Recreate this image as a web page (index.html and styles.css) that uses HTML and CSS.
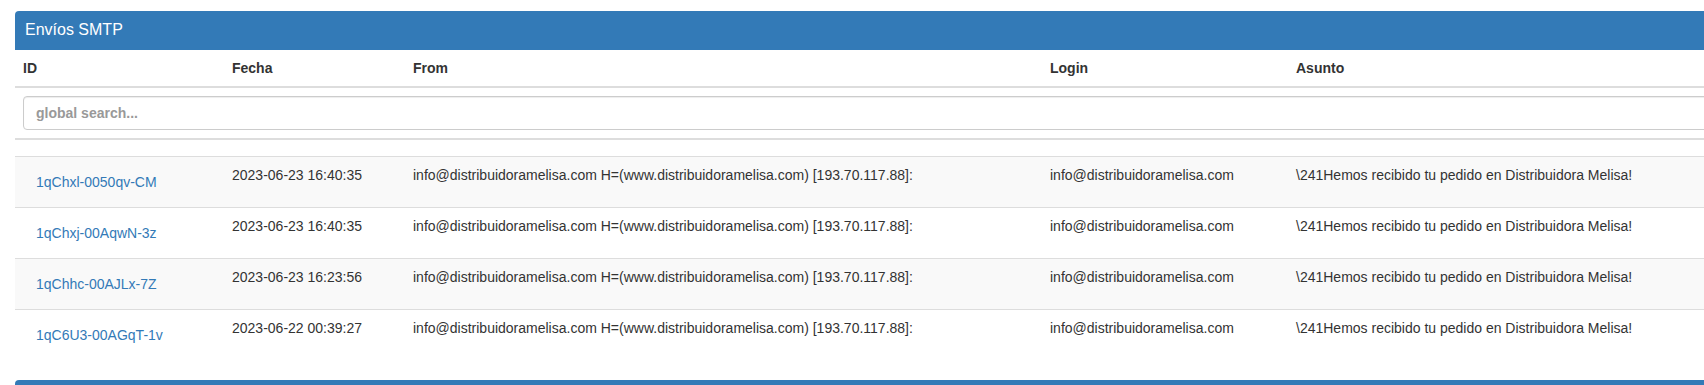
FILE: index.html
```html
<!DOCTYPE html>
<html>
<head>
  <meta charset="utf-8">
  <title>Envíos SMTP</title>
  <link rel="stylesheet" href="styles.css">
</head>
<body>
  <div class="page">
    <div class="panel">
      <div class="panel-heading">
        <h3 class="panel-title">Envíos SMTP</h3>
      </div>
      <table class="table">
        <colgroup>
          <col class="col-id">
          <col class="col-date">
          <col class="col-from">
          <col class="col-login">
          <col>
        </colgroup>
        <thead>
          <tr>
            <th>ID</th>
            <th>Fecha</th>
            <th>From</th>
            <th>Login</th>
            <th>Asunto</th>
          </tr>
          <tr>
            <th colspan="5"><input class="form-control" type="text" placeholder="global search..."></th>
          </tr>
        </thead>
        <tbody>
          <tr class="spacer"><td colspan="5"></td></tr>
          <tr class="striped">
            <td><button class="btn-link">1qChxl-0050qv-CM</button></td>
            <td>2023-06-23 16:40:35</td>
            <td>info@distribuidoramelisa.com H=(www.distribuidoramelisa.com) [193.70.117.88]:</td>
            <td>info@distribuidoramelisa.com</td>
            <td>\241Hemos recibido tu pedido en Distribuidora Melisa!</td>
          </tr>
          <tr>
            <td><button class="btn-link">1qChxj-00AqwN-3z</button></td>
            <td>2023-06-23 16:40:35</td>
            <td>info@distribuidoramelisa.com H=(www.distribuidoramelisa.com) [193.70.117.88]:</td>
            <td>info@distribuidoramelisa.com</td>
            <td>\241Hemos recibido tu pedido en Distribuidora Melisa!</td>
          </tr>
          <tr class="striped">
            <td><button class="btn-link">1qChhc-00AJLx-7Z</button></td>
            <td>2023-06-23 16:23:56</td>
            <td>info@distribuidoramelisa.com H=(www.distribuidoramelisa.com) [193.70.117.88]:</td>
            <td>info@distribuidoramelisa.com</td>
            <td>\241Hemos recibido tu pedido en Distribuidora Melisa!</td>
          </tr>
          <tr>
            <td><button class="btn-link">1qC6U3-00AGqT-1v</button></td>
            <td>2023-06-22 00:39:27</td>
            <td>info@distribuidoramelisa.com H=(www.distribuidoramelisa.com) [193.70.117.88]:</td>
            <td>info@distribuidoramelisa.com</td>
            <td>\241Hemos recibido tu pedido en Distribuidora Melisa!</td>
          </tr>
        </tbody>
      </table>
    </div>

    <div class="panel">
      <div class="panel-heading empty"></div>
    </div>
  </div>
</body>
</html>
```

FILE: styles.css
```css
body {
  font-family: "Liberation Sans", Arial, sans-serif;
  font-size: 14px;
  line-height: 20px;
  color: #333;
  background-color: #fff;
  margin: 0;
  overflow: hidden;
}

.page {
  padding: 11px 0 0 15px;
}

.panel {
  margin-right: -40px;
  margin-bottom: 20px;
  background-color: #fff;
  border-radius: 4px;
}

.panel-heading {
  background-color: #337ab7;
  color: #fff;
  padding: 10px 10px 11px;
  border-top-left-radius: 4px;
  border-top-right-radius: 4px;
}

.panel-heading.empty {
  height: 18px;
}

.panel-title {
  margin: 0;
  font-size: 16px;
  font-weight: normal;
  line-height: 18px;
}

.table {
  width: 100%;
  border-collapse: collapse;
  border-spacing: 0;
}

.col-id { width: 209px; }
.col-date { width: 181px; }
.col-from { width: 637px; }
.col-login { width: 246px; }

.table th,
.table td {
  padding: 8px;
  text-align: left;
  vertical-align: top;
}

.table th {
  font-weight: bold;
  border-bottom: 2px solid #ddd;
}

.table td {
  border-top: 1px solid #ddd;
}

.table .spacer td {
  border-top: none;
  padding: 8px;
  height: 0;
}

.table tr.striped td {
  background-color: #f9f9f9;
}

.form-control {
  display: block;
  box-sizing: border-box;
  width: 100%;
  height: 34px;
  padding: 6px 12px;
  font-family: inherit;
  font-size: 14px;
  font-weight: bold;
  color: #555;
  border: 1px solid #ccc;
  border-radius: 4px;
  box-shadow: inset 0 1px 1px rgba(0, 0, 0, 0.075);
}

.form-control::placeholder {
  color: #999;
}

.btn-link {
  font-family: inherit;
  font-size: 14px;
  line-height: 20px;
  padding: 6px 12px;
  border: 1px solid transparent;
  background: none;
  color: #337ab7;
  cursor: pointer;
}
```
